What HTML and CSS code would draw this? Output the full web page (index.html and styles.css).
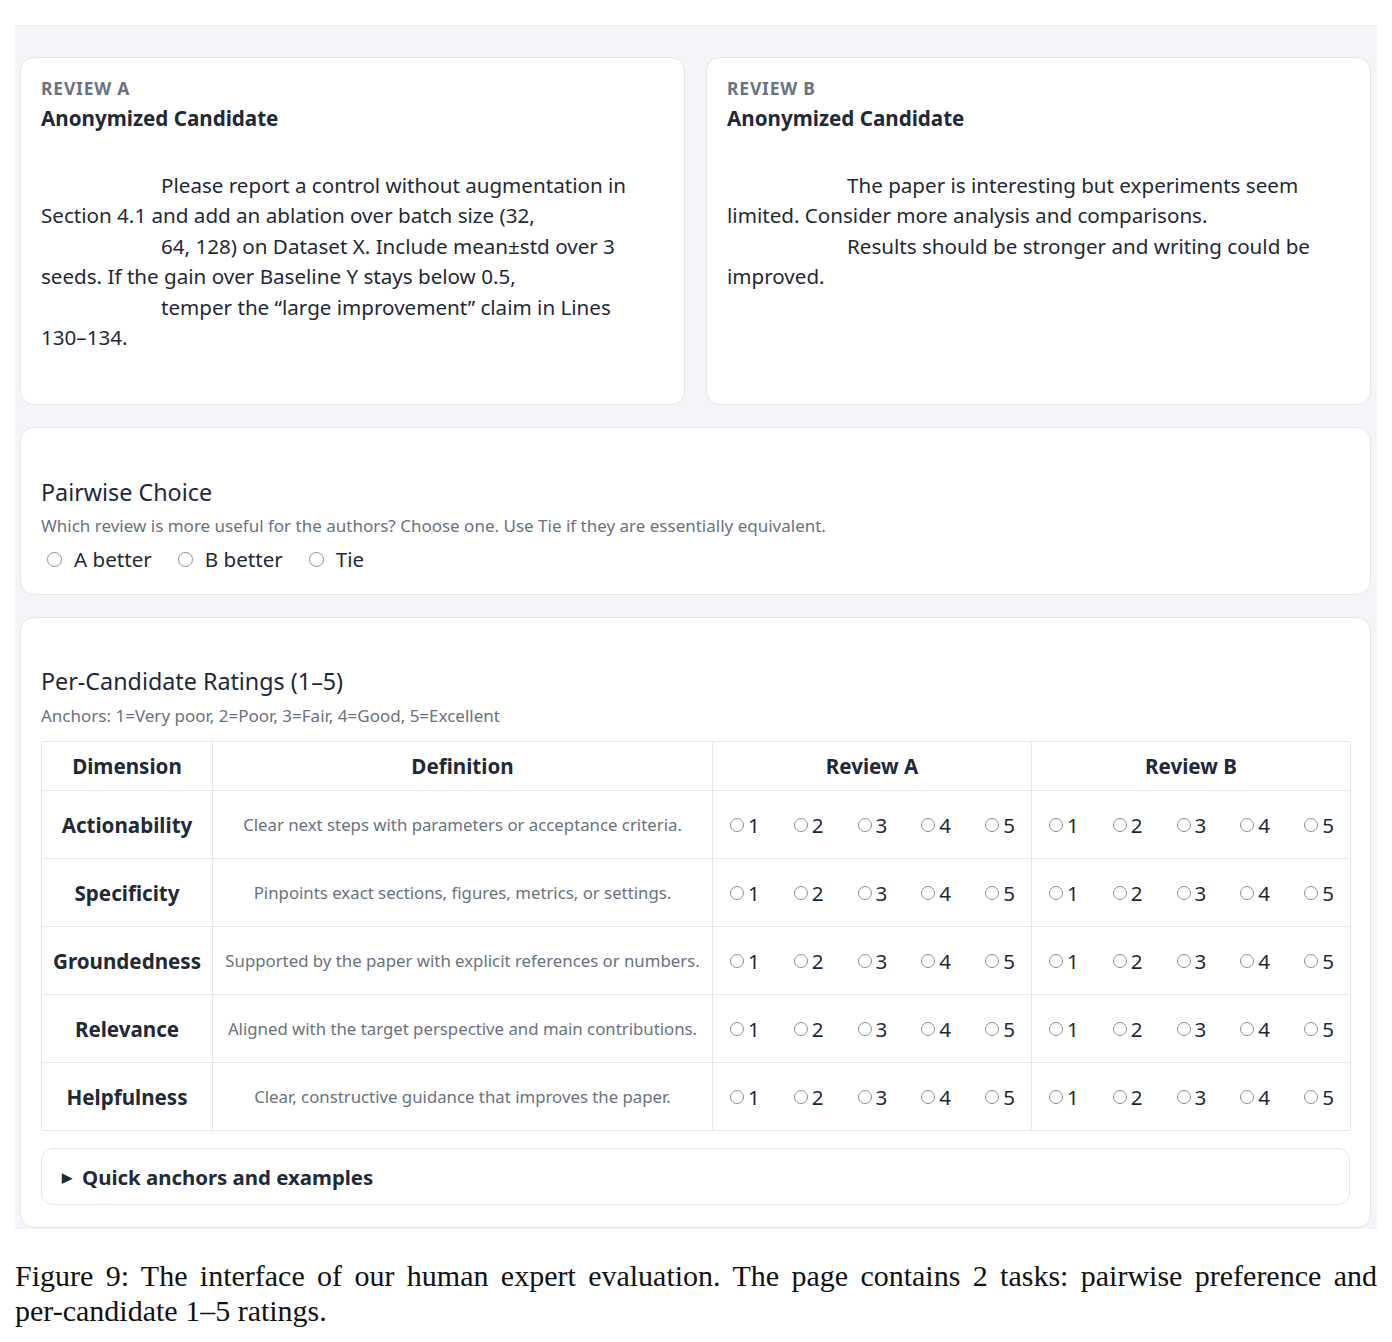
FILE: index.html
```html
<!DOCTYPE html>
<html lang="en">
<head>
<meta charset="utf-8">
<title>Human Expert Evaluation</title>
<link rel="stylesheet" href="styles.css">
</head>
<body>
<figure class="figure">
  <div class="app">
    <div class="reviews">
      <section class="card review">
        <div class="review-label">Review A</div>
        <div class="review-title">Anonymized Candidate</div>
        <div class="review-body">
          <div class="ind">Please report a control without augmentation in</div>
          <div>Section 4.1 and add an ablation over batch size (32,</div>
          <div class="ind">64, 128) on Dataset X. Include mean±std over 3</div>
          <div>seeds. If the gain over Baseline Y stays below 0.5,</div>
          <div class="ind">temper the “large improvement” claim in Lines</div>
          <div>130–134.</div>
        </div>
      </section>
      <section class="card review">
        <div class="review-label">Review B</div>
        <div class="review-title">Anonymized Candidate</div>
        <div class="review-body">
          <div class="ind">The paper is interesting but experiments seem</div>
          <div>limited. Consider more analysis and comparisons.</div>
          <div class="ind">Results should be stronger and writing could be</div>
          <div>improved.</div>
        </div>
      </section>
    </div>

    <section class="card block">
      <h2 class="block-title">Pairwise Choice</h2>
      <p class="block-hint">Which review is more useful for the authors? Choose one. Use Tie if they are essentially equivalent.</p>
      <div class="choices">
        <label class="choice"><span class="radio"></span>A better</label>
        <label class="choice"><span class="radio"></span>B better</label>
        <label class="choice"><span class="radio"></span>Tie</label>
      </div>
    </section>

    <section class="card block ratings">
      <h2 class="block-title">Per-Candidate Ratings (1–5)</h2>
      <p class="block-hint">Anchors: 1=Very poor, 2=Poor, 3=Fair, 4=Good, 5=Excellent</p>
      <table class="grid">
        <colgroup>
          <col class="c-dim"><col class="c-def"><col class="c-rev"><col class="c-rev">
        </colgroup>
        <thead>
          <tr><th>Dimension</th><th>Definition</th><th>Review A</th><th>Review B</th></tr>
        </thead>
        <tbody id="rows"></tbody>
      </table>
      <div class="details"><span class="caret">&#9654;</span>Quick anchors and examples</div>
    </section>
  </div>
  <figcaption class="caption">Figure 9: The interface of our human expert evaluation. The page contains 2 tasks: pairwise preference and <span class="nobr">per-candidate</span> 1–5 ratings.</figcaption>
</figure>
<script src="app.js"></script>
</body>
</html>
```

FILE: app.js
```js
// Build the rating rows: one scale of 1–5 for each review.
const dims = [
  ["Actionability", "Clear next steps with parameters or acceptance criteria."],
  ["Specificity", "Pinpoints exact sections, figures, metrics, or settings."],
  ["Groundedness", "Supported by the paper with explicit references or numbers."],
  ["Relevance", "Aligned with the target perspective and main contributions."],
  ["Helpfulness", "Clear, constructive guidance that improves the paper."]
];

function scale() {
  let html = '<td class="rate"><div class="scale">';
  for (let i = 1; i <= 5; i++) {
    html += '<label class="pt"><span class="radio sm"></span>' + i + '</label>';
  }
  return html + '</div></td>';
}

const body = document.getElementById("rows");
body.innerHTML = dims.map(([name, def]) =>
  '<tr><td class="dim">' + name + '</td><td class="def">' + def + '</td>' + scale() + scale() + '</tr>'
).join("");
```

FILE: styles.css
```css
* { box-sizing: border-box; }

body {
  margin: 0;
  background: #fff;
  font-family: "Noto Sans", "Open Sans", sans-serif;
  color: #1f2937;
}

.figure {
  margin: 0;
  padding: 25px 15px 0 15px;
}

.app {
  background: #f5f5f9;
  border-top: 1px solid #ececf0;
  padding: 31px 6px 1px 5px;
  display: flex;
  flex-direction: column;
  gap: 22px;
}

.card {
  background: #fff;
  border: 1px solid #e6e7eb;
  border-radius: 14px;
}

.reviews {
  display: grid;
  grid-template-columns: 1fr 1fr;
  gap: 21px;
}

.review {
  padding: 17px 20px 20px;
  min-height: 348px;
}

.review-label {
  font-size: 17.5px;
  font-weight: 700;
  text-transform: uppercase;
  color: #6b7280;
  line-height: 27px;
  letter-spacing: 0.8px;
}

.review-title {
  font-size: 20.6px;
  font-weight: 700;
  line-height: 30px;
  margin-top: 1px;
}

.review-body {
  margin-top: 37px;
  font-size: 20.6px;
  line-height: 30.4px;
  white-space: nowrap;
}

.review-body .ind { padding-left: 120px; }

.block {
  padding: 20px 20px 20px;
}

.block-title {
  margin: 29px 0 0;
  font-size: 23.3px;
  font-weight: 400;
  line-height: 30px;
}

.block-hint {
  margin: 4px 0 0;
  font-size: 17px;
  line-height: 30px;
  color: #6b7280;
}

.choices {
  display: flex;
  gap: 26px;
  margin-top: 3px;
  padding-left: 6px;
  font-size: 20.6px;
  line-height: 30px;
}

.choice {
  display: flex;
  align-items: center;
  gap: 12px;
}

.radio {
  display: inline-block;
  flex: none;
  width: 15px;
  height: 15px;
  border: 1.5px solid #8a8f98;
  border-radius: 50%;
}

.radio.sm {
  width: 14px;
  height: 14px;
  margin-right: 4px;
}

.ratings { padding-bottom: 22px; }

.ratings .block-title { margin-top: 28px; }

.ratings .block-hint {
  margin-top: 5px;
  margin-bottom: 10px;
}

.grid {
  width: 100%;
  border-collapse: collapse;
  table-layout: fixed;
}

.c-dim { width: 171px; }
.c-def { width: 500px; }
.c-rev { width: 319px; }

.grid th,
.grid td {
  border: 1px solid #e6e7eb;
  text-align: center;
  padding: 0 6px;
}

.grid th {
  height: 49px;
  font-size: 20.6px;
  font-weight: 700;
}

.grid td { height: 68px; }

.grid .dim {
  font-size: 20.6px;
  font-weight: 700;
}

.grid .def {
  font-size: 16.8px;
  color: #6b7280;
  white-space: nowrap;
}

.grid .rate { padding: 0; }

.scale {
  display: flex;
  gap: 34px;
  padding-left: 17px;
}

.pt {
  display: flex;
  align-items: center;
  font-size: 20.6px;
  color: #1f2937;
}

.details {
  margin-top: 17px;
  height: 57px;
  border: 1px solid #e6e7eb;
  border-radius: 12px;
  display: flex;
  align-items: center;
  padding-left: 20px;
  font-size: 20.4px;
  font-weight: 700;
}

.caret {
  font-size: 13px;
  margin-right: 10px;
}

.caption {
  margin-top: 29px;
  font-family: "Liberation Serif", "Times New Roman", serif;
  font-size: 30px;
  line-height: 35px;
  color: #111;
  text-align: justify;
}

.nobr { white-space: nowrap; }
```
